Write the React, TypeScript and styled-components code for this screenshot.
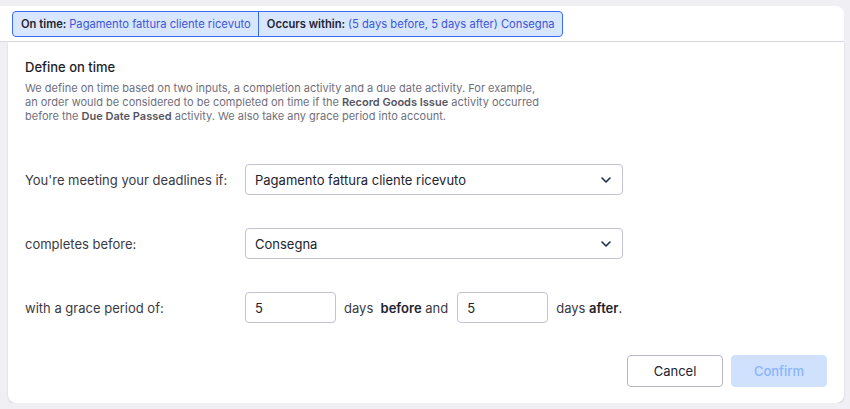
import React from "react";
import styled, { createGlobalStyle } from "styled-components";

const GlobalStyle = createGlobalStyle`
  *, *::before, *::after {
    box-sizing: border-box;
  }
  html, body {
    margin: 0;
    padding: 0;
    background: #efeff4;
    font-family: Inter, "Noto Sans", sans-serif;
    color: #2b2b36;
  }
`;

const Frame = styled.div`
  width: 844px;
  padding-top: 6px;
`;

const TopBar = styled.div`
  background: #ffffff;
  border-top-right-radius: 8px;
  border-bottom: 1px solid #d9d8e2;
  padding: 4px 12px 3px;
  height: 36px;
  display: flex;
  align-items: center;
`;

const Pills = styled.div`
  display: flex;
  border: 1px solid #3a6df0;
  border-radius: 4px;
  background: #d8e7ff;
  height: 26px;
`;

const Pill = styled.div<{ $divider?: boolean }>`
  display: flex;
  align-items: center;
  padding: 0 7px 0 8px;
  font-size: 11.2px;
  white-space: pre;
  border-left: ${p => (p.$divider ? "1px solid #3a6df0" : "none")};

  b {
    font-weight: 600;
    color: #23232e;
  }
  span {
    color: #3d56d6;
  }
`;

const Card = styled.div`
  margin-left: 8px;
  background: #ffffff;
  border-bottom-left-radius: 8px;
  border-bottom-right-radius: 8px;
  box-shadow: 0 1px 2px rgba(60, 60, 90, 0.18);
  padding: 17px 17px 16px 17px;
  height: 361px;
  display: flex;
  flex-direction: column;
`;

const Title = styled.div`
  font-size: 13px;
  font-weight: 500;
  color: #1e1e28;
  line-height: 16px;
`;

const Description = styled.p`
  margin: 6px 0 0;
  font-size: 11px;
  line-height: 14px;
  color: #6f6f7c;
  white-space: nowrap;

  b {
    font-weight: 600;
    color: #55555f;
  }
`;

const Form = styled.div`
  margin-top: 41px;
  display: flex;
  flex-direction: column;
  gap: 33px;
`;

const Row = styled.div`
  display: flex;
  align-items: center;
  height: 31px;
`;

const Label = styled.div`
  width: 220px;
  font-size: 13px;
  color: #3a3a44;
`;

const Select = styled.div`
  width: 378px;
  height: 31px;
  border: 1px solid #c3c2d2;
  border-radius: 4px;
  display: flex;
  align-items: center;
  justify-content: space-between;
  padding: 0 11px 0 9px;
  font-size: 13px;
  color: #23232e;
`;

const NumberBox = styled.div`
  width: 91px;
  height: 31px;
  border: 1px solid #c3c2d2;
  border-radius: 4px;
  display: flex;
  align-items: center;
  padding: 0 9px;
  font-size: 13px;
  color: #23232e;
`;

const Unit = styled.div`
  font-size: 13px;
  color: #3a3a44;
  padding: 0 9px 0 8px;
  white-space: pre;

  b {
    font-weight: 600;
    color: #23232e;
  }
`;

const Footer = styled.div`
  margin-top: auto;
  display: flex;
  justify-content: flex-end;
  gap: 8px;
`;

const Button = styled.button<{ $primary?: boolean }>`
  width: 96px;
  height: 32px;
  border-radius: 4px;
  font-family: Inter, "Noto Sans", sans-serif;
  font-size: 13px;
  font-weight: ${p => (p.$primary ? 500 : 400)};
  border: 1px solid ${p => (p.$primary ? "#cfe1fd" : "#b7b5c6")};
  background: ${p => (p.$primary ? "#cfe1fd" : "#ffffff")};
  color: ${p => (p.$primary ? "#8ab4fb" : "#23232e")};
`;

const Chevron = () => (
  <svg width="10" height="6" viewBox="0 0 10 6" fill="none">
    <path d="M1 1l4 4 4-4" stroke="#1e2a4a" strokeWidth="1.6" strokeLinecap="round" strokeLinejoin="round" />
  </svg>
);

export default function App() {
  return (
    <>
      <GlobalStyle />
      <Frame>
        <TopBar>
          <Pills>
            <Pill>
              <b>On time: </b>
              <span>Pagamento fattura cliente ricevuto</span>
            </Pill>
            <Pill $divider>
              <b>Occurs within: </b>
              <span>(5 days before, 5 days after) Consegna</span>
            </Pill>
          </Pills>
        </TopBar>
        <Card>
          <Title>Define on time</Title>
          <Description>
            We define on time based on two inputs, a completion activity and a due date activity. For example,
            <br />
            an order would be considered to be completed on time if the <b>Record Goods Issue</b> activity occurred
            <br />
            before the <b>Due Date Passed</b> activity. We also take any grace period into account.
          </Description>
          <Form>
            <Row>
              <Label>You're meeting your deadlines if:</Label>
              <Select>
                Pagamento fattura cliente ricevuto
                <Chevron />
              </Select>
            </Row>
            <Row>
              <Label>completes before:</Label>
              <Select>
                Consegna
                <Chevron />
              </Select>
            </Row>
            <Row>
              <Label>with a grace period of:</Label>
              <NumberBox>5</NumberBox>
              <Unit>
                days  <b>before</b> and
              </Unit>
              <NumberBox>5</NumberBox>
              <Unit>
                days <b>after</b>.
              </Unit>
            </Row>
          </Form>
          <Footer>
            <Button>Cancel</Button>
            <Button $primary>Confirm</Button>
          </Footer>
        </Card>
      </Frame>
    </>
  );
}
